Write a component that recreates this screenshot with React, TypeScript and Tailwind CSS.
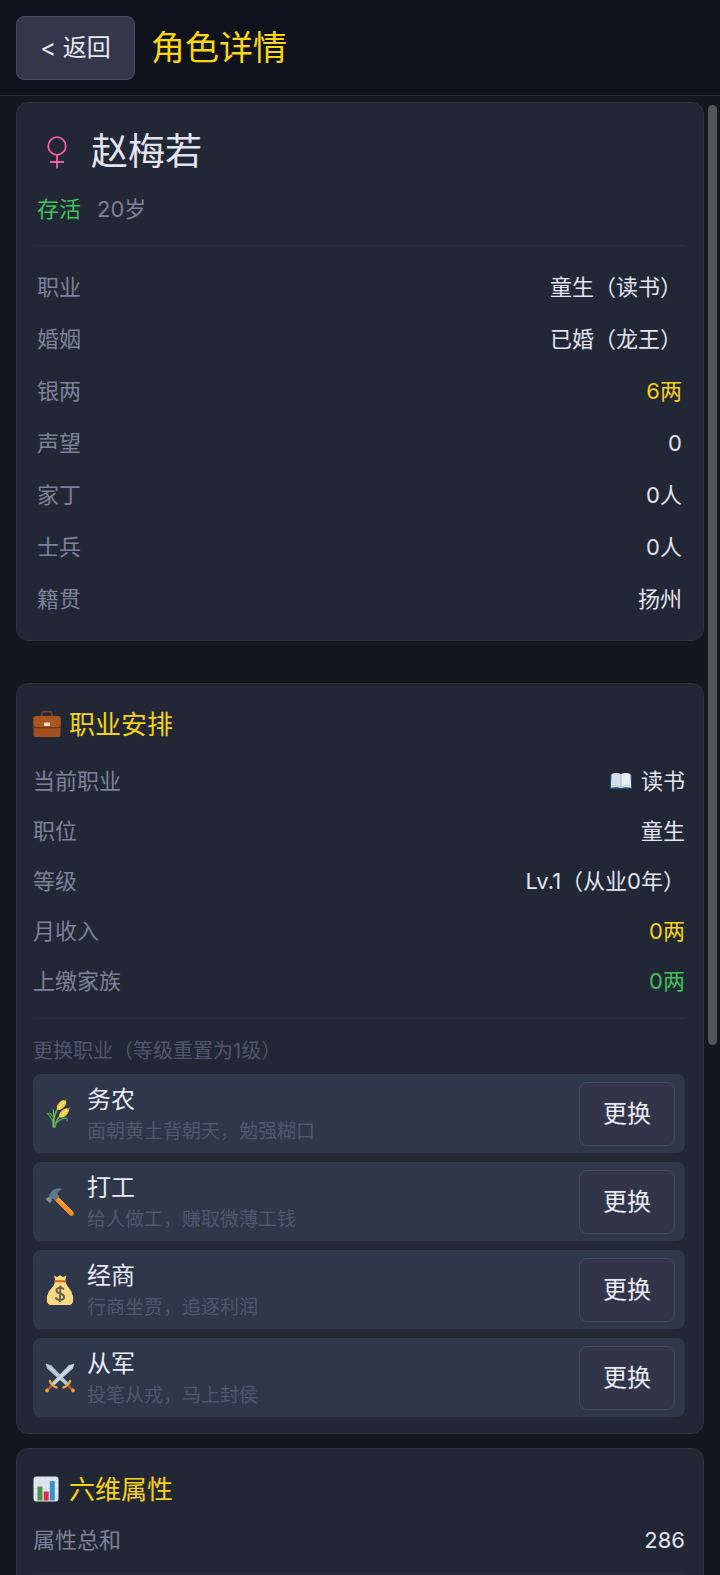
import React from 'react';
import clsx from 'clsx';

type Tone = 'normal' | 'gold' | 'green';

interface Info {
  label: string;
  value: string;
  tone?: Tone;
  icon?: React.ReactNode;
}

interface Job {
  name: string;
  desc: string;
  icon: React.ReactNode;
}

const toneClass: Record<Tone, string> = {
  normal: 'text-[#e2e4f2]',
  gold: 'text-[#f5d312]',
  green: 'text-[#3fc25a]',
};

const FemaleIcon = () => (
  <svg viewBox="0 0 20 33" className="h-[33px] w-5 shrink-0" fill="none" stroke="#f0609a" strokeWidth="1.8">
    <circle cx="10" cy="10" r="8.8" />
    <path d="M10 19v13.5M3 26h14" />
  </svg>
);

const BriefcaseIcon = () => (
  <svg viewBox="0 0 28 28" className="h-7 w-7 shrink-0">
    <path d="M9 7V4Q9 1.500 11.500 1.500H16.500Q19 1.500 19 4V7" fill="none" stroke="#7d4024" strokeWidth="1.6" />
    <rect x="0.500" y="6" width="27" height="21" rx="2.500" fill="#a04f20" />
    <path d="M0.500 8.500Q0.500 6 3 6H25Q27.500 6 27.500 8.500V16Q27.500 17.500 25 17.500H3Q.5 17.500.5 16Z" fill="#ac5422" />
    <path d="M.5 16Q.5 17.700 3 17.700H25Q27.500 17.700 27.500 16" fill="none" stroke="#6f3114" strokeWidth="1" />
    <rect x="11" y="12.500" width="6" height="3.500" rx="0.800" fill="#f3dfd2" />
  </svg>
);

const BookIcon = () => (
  <svg viewBox="0 0 24 18" className="h-[18px] w-6 shrink-0">
    <path d="M1 3H23V17H13L12 18 11 17H1Z" fill="#1d4a70" />
    <path d="M2.500 2Q7 0 12 2V16Q7 14.500 1.800 15.800Z" fill="#d5e1e8" />
    <path d="M21.500 2Q17 0 12 2V16Q17 14.500 22.200 15.800Z" fill="#e6eef2" />
    <path d="M12 2V16" stroke="#a5b8c4" strokeWidth="1" />
    <path d="M2 13.800Q7 12.800 12 14.800Q17 12.800 22 13.800" fill="none" stroke="#b3c5d0" strokeWidth=".8" />
  </svg>
);

const ChartIcon = () => (
  <svg viewBox="0 0 26 26" className="mr-0.5 h-[26px] w-[26px] shrink-0">
    <rect x=".5" y=".5" width="25" height="25" rx="3" fill="#dfe7ee" />
    <path d="M1 6.500H25M1 12.500H25M1 18.500H25M7 1V25M13 1V25M19 1V25" stroke="#ced9e1" strokeWidth=".7" />
    <rect x="4.500" y="10.500" width="5" height="14" fill="#4f9146" />
    <rect x="10.700" y="15.500" width="5" height="9" fill="#df2a4c" />
    <rect x="16.800" y="5" width="5" height="19.500" fill="#3d8fd1" />
  </svg>
);

const WheatIcon = () => (
  <svg viewBox="0 0 30 30" className="h-[30px] w-[30px] shrink-0" fill="none" strokeLinecap="round">
    <path d="M9 28Q8 20 2.500 14.500Q5 13 7 17" stroke="#4f9a48" strokeWidth="1.400" />
    <path d="M9 28Q8 15 14 8" stroke="#6cae50" strokeWidth="1.600" />
    <path d="M10 28Q11 20 17 15" stroke="#78b857" strokeWidth="1.600" />
    <path d="M9 28Q13 20 20 19Q23 19 22 22" stroke="#4f9a48" strokeWidth="1.400" />
    <path d="M8 28Q9 18 8.500 11" stroke="#8fc765" strokeWidth="1" />
    <ellipse cx="16.500" cy="6" rx="3.300" ry="6" transform="rotate(42 16.500 6)" fill="#efc93f" />
    <ellipse cx="19" cy="14" rx="3.200" ry="6" transform="rotate(48 19 14)" fill="#efc93f" />
    <path d="M14 9L19 3M17 16L22 11" stroke="#fbe98a" strokeWidth="1.500" />
    <path d="M19 2L21 .8M23 10L25 9" stroke="#9db548" strokeWidth="1" />
  </svg>
);

const HammerIcon = () => (
  <svg viewBox="0 0 30 30" className="h-[30px] w-[30px] shrink-0">
    <path d="M11.500 11.500L26.500 26.500" stroke="#f7931e" strokeWidth="4.600" strokeLinecap="round" />
    <path d="M13 10.500L27 24.500" stroke="#ffad42" strokeWidth="1" />
    <path d="M.8 12L4 9.500Q5.500 3.500 10.500 2Q15 .5 17 2.500Q12.500 4 12.500 7L14.500 9.500L10.500 13.500L8 11.500L6.500 12.500L5 16Z" fill="#5f7886" />
    <path d="M.8 12L3.500 10L7 13.500L5 16Z" fill="#7c95a2" />
  </svg>
);

const MoneyBagIcon = () => (
  <svg viewBox="0 0 30 32" className="h-8 w-[30px] shrink-0">
    <path d="M9 1.500L12 3L15 1.200L18 3L21.500 1.500L20 7H10.500Z" fill="#fcd67a" />
    <path d="M10.500 7H19.800Q22 12 25.500 16Q27 18 27 20Q29 22 28 25Q29 29 25 31H5Q1 29 2 25Q1 22 3 20Q3 18 5 16Q9 12 10.500 7Z" fill="#fcd982" />
    <path d="M10 7.200H20.500" stroke="#d06e2c" strokeWidth="2" strokeLinecap="round" />
    <path d="M19 15.500Q17.500 13.500 15 13.700Q11.500 14 11.500 16.500Q11.500 18.800 15.200 19.500Q19 20.300 19 23Q19 26 15 26Q12 26 10.500 23.500M15.500 11.500L14.800 28" fill="none" stroke="#665e50" strokeWidth="2" />
  </svg>
);

const SwordsIcon = () => (
  <svg viewBox="0 0 30 30" className="h-[30px] w-[30px] shrink-0">
    <path d="M1 1L6 2L23.500 20L21 22.500L2 5.500Z" fill="#a5bdcb" />
    <path d="M1 1L22.500 21.500" stroke="#c9d9e2" strokeWidth="1.300" />
    <path d="M29 1L24 2L6.500 20L9 22.500L28 5.500Z" fill="#b4cad6" />
    <path d="M29 1L7.500 21.500" stroke="#d6e3ea" strokeWidth="1.300" />
    <path d="M5 18Q5.500 20.500 7.500 22Q9.500 24 11.500 24.500" fill="none" stroke="#f0a844" strokeWidth="2.400" strokeLinecap="round" />
    <path d="M25 18Q24.500 20.500 22.500 22Q20.500 24 18.500 24.500" fill="none" stroke="#f0a844" strokeWidth="2.400" strokeLinecap="round" />
    <path d="M6.500 23L2.500 27M23.500 23L27.500 27" stroke="#a8502f" strokeWidth="2.800" />
    <circle cx="2" cy="27.500" r="1.900" fill="#ec9f3e" />
    <circle cx="28" cy="27.500" r="1.900" fill="#ec9f3e" />
  </svg>
);

const basics: Info[] = [
  { label: '职业', value: '童生（读书）' },
  { label: '婚姻', value: '已婚（龙王）' },
  { label: '银两', value: '6两', tone: 'gold' },
  { label: '声望', value: '0' },
  { label: '家丁', value: '0人' },
  { label: '士兵', value: '0人' },
  { label: '籍贯', value: '扬州' },
];

const career: Info[] = [
  { label: '当前职业', value: '读书', icon: <BookIcon /> },
  { label: '职位', value: '童生' },
  { label: '等级', value: 'Lv.1（从业0年）' },
  { label: '月收入', value: '0两', tone: 'gold' },
  { label: '上缴家族', value: '0两', tone: 'green' },
];

const jobs: Job[] = [
  { name: '务农', desc: '面朝黄土背朝天，勉强糊口', icon: <WheatIcon /> },
  { name: '打工', desc: '给人做工，赚取微薄工钱', icon: <HammerIcon /> },
  { name: '经商', desc: '行商坐贾，追逐利润', icon: <MoneyBagIcon /> },
  { name: '从军', desc: '投笔从戎，马上封侯', icon: <SwordsIcon /> },
];

const Card: React.FC<{ className?: string; children: React.ReactNode }> = ({ className, children }) => (
  <section className={clsx('rounded-xl border border-[#2c303e] bg-[#222735] pr-[18px] pl-4', className)}>
    {children}
  </section>
);

const Divider = ({ className }: { className?: string }) => (
  <hr className={clsx('border-0 border-t border-[#2a2e3c]', className)} />
);

const InfoRow: React.FC<{ info: Info; className: string }> = ({ info, className }) => (
  <div className={clsx('flex items-center justify-between text-[22px]', className)}>
    <dt className="text-[#7d819b]">{info.label}</dt>
    <dd className={clsx('flex items-center gap-2', toneClass[info.tone ?? 'normal'])}>
      {info.icon}
      {info.value}
    </dd>
  </div>
);

const SectionTitle: React.FC<{ icon: React.ReactNode; children: React.ReactNode }> = ({ icon, children }) => (
  <h2 className="flex h-10 items-center gap-2 text-[26px] text-[#f5d312]">
    {icon}
    {children}
  </h2>
);

const JobRow: React.FC<{ job: Job }> = ({ job }) => (
  <li className="flex h-[79px] items-center rounded-lg bg-[#2f374a] pr-2.5 pl-3">
    {job.icon}
    <div className="ml-3 flex-1 pt-1">
      <div className="text-[24px] leading-8 text-[#e8eaf6]">{job.name}</div>
      <div className="text-[19px] leading-8 text-[#50566f]">{job.desc}</div>
    </div>
    <button
      type="button"
      aria-label={`更换为${job.name}`}
      className="h-16 w-24 rounded-lg border border-[#464a5e] bg-[#32354a] text-[24px] text-[#e8eaf6]"
    >
      更换
    </button>
  </li>
);

export default function App() {
  return (
    <div className="flex h-screen flex-col overflow-hidden bg-[#14171e] font-['Inter','Noto_Sans_CJK_SC',sans-serif] text-[#e2e4f2]">
      <header className="flex h-24 shrink-0 items-center gap-4 border-b border-[#2a2b37] bg-[#0f111c] px-4">
        <button
          type="button"
          className="h-16 w-[119px] rounded-lg border border-[#484b60] bg-[#34374b] text-[24px] text-[#e8eaf6]"
        >
          &lt; 返回
        </button>
        <h1 className="text-[34px] text-[#f9d70c]">角色详情</h1>
      </header>

      <main className="relative min-h-0 flex-1 overflow-hidden px-4 pt-1.5">
        <Card className="pt-[25px] pb-[15px]">
          <div className="flex h-12 items-center gap-6 pl-3.5">
            <FemaleIcon />
            <h2 className="text-[37px]">赵梅若</h2>
          </div>
          <div className="mt-[17px] flex h-8 items-center gap-4 pr-[3px] pl-1 text-[22px]">
            <span className="text-[#3fc25a]">存活</span>
            <span className="text-[#7d819b]">20岁</span>
          </div>
          <Divider className="mt-5" />
          <dl className="mt-[15px] pr-[3px] pl-1">
            {basics.map((info) => (
              <InfoRow key={info.label} info={info} className="h-[52px]" />
            ))}
          </dl>
        </Card>

        <Card className="mt-[42px] pt-5 pb-4">
          <SectionTitle icon={<BriefcaseIcon />}>职业安排</SectionTitle>
          <dl className="mt-3">
            {career.map((info) => (
              <InfoRow key={info.label} info={info} className="h-[50px]" />
            ))}
          </dl>
          <Divider className="mt-3" />
          <p className="mt-4 text-[20px] leading-8 text-[#50566f]">更换职业（等级重置为1级）</p>
          <ul className="mt-[7px] space-y-[9px]">
            {jobs.map((job) => (
              <JobRow key={job.name} job={job} />
            ))}
          </ul>
        </Card>

        <Card className="mt-3.5 pt-5 pb-8">
          <SectionTitle icon={<ChartIcon />}>六维属性</SectionTitle>
          <dl className="mt-1.5">
            <InfoRow info={{ label: '属性总和', value: '286' }} className="h-[50px]" />
          </dl>
          <Divider className="mt-2" />
        </Card>

        <div className="absolute top-[9px] right-[3px] h-[940px] w-[9px] rounded-full bg-[#545556]" />
      </main>
    </div>
  );
}
